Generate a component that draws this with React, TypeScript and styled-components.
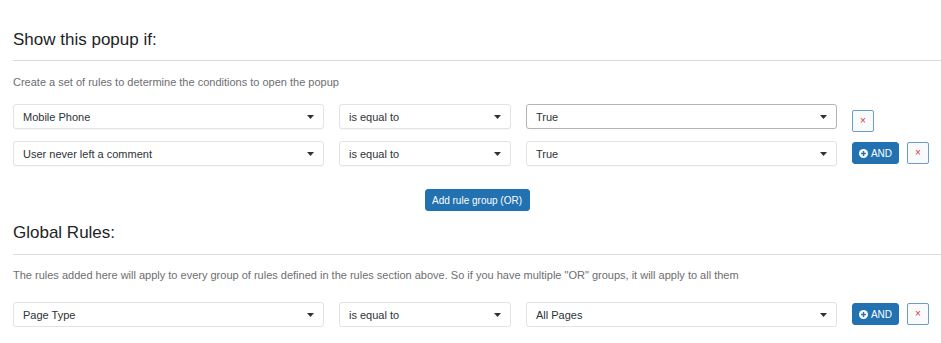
import styled, { createGlobalStyle } from 'styled-components';

const GlobalStyle = createGlobalStyle`
    html, body {
        margin: 0;
        padding: 0;
        background: #ffffff;
    }
    body {
        font-family: "Liberation Sans", Arial, Helvetica, sans-serif;
        color: #23282d;
    }
`;

const Page = styled.div`
    width: 941px;
    padding: 0 0 0 13px;
    box-sizing: border-box;
`;

const Section = styled.section`
    display: flex;
    flex-direction: column;
`;

const SectionHeader = styled.div<{ $top: number; $bottom: number }>`
    padding: ${(p) => p.$top}px 0 ${(p) => p.$bottom}px;
    border-bottom: 1px solid #dcdcde;
`;

const Title = styled.h2`
    margin: 0;
    font-size: 17px;
    line-height: 20px;
    font-weight: 400;
    color: #1d2327;
`;

const Description = styled.p<{ $top: number; $bottom: number }>`
    margin: ${(p) => p.$top}px 0 ${(p) => p.$bottom}px;
    font-size: 11px;
    line-height: 16px;
    color: #6d6e70;
`;

const RuleList = styled.div`
    display: flex;
    flex-direction: column;
    row-gap: 12px;
`;

const RuleRow = styled.div`
    display: flex;
    align-items: flex-start;
    column-gap: 15px;
    height: 25px;
`;

const SelectBox = styled.div<{ $width: number; $active?: boolean }>`
    width: ${(p) => p.$width}px;
    height: 25px;
    box-sizing: border-box;
    display: flex;
    align-items: center;
    justify-content: space-between;
    padding: 0 9px 0 9px;
    background: #ffffff;
    border: 1px solid ${(p) => (p.$active ? '#b4b4b4' : '#e3e3e5')};
    border-radius: 3px;
    box-shadow: 0 1px 1px rgba(0, 0, 0, 0.03);
    font-size: 11px;
    color: #2c3338;
`;

const Caret = styled.svg`
    width: 7px;
    height: 4px;
    flex-shrink: 0;
`;

const Actions = styled.div<{ $top: number }>`
    display: flex;
    align-items: flex-start;
    column-gap: 8px;
    height: 25px;
    padding-top: ${(p) => p.$top}px;
    box-sizing: border-box;
`;

const RemoveButton = styled.button`
    width: 22px;
    height: 22px;
    flex-shrink: 0;
    padding: 0;
    display: flex;
    align-items: center;
    justify-content: center;
    background: #f8fafc;
    border: 1px solid #6c9bd0;
    border-radius: 2px;
    color: #d63638;
    font-family: "Liberation Sans", Arial, sans-serif;
    font-size: 10px;
    line-height: 1;
    cursor: pointer;
`;

const PrimaryButton = styled.button<{ $width: number }>`
    width: ${(p) => p.$width}px;
    height: 22px;
    flex-shrink: 0;
    padding: 0;
    display: flex;
    align-items: center;
    justify-content: center;
    column-gap: 3px;
    background: #2271b1;
    border: 1px solid #2271b1;
    border-radius: 3px;
    color: #ffffff;
    font-family: "Liberation Sans", Arial, sans-serif;
    font-size: 10px;
    cursor: pointer;
`;

const CenterBar = styled.div`
    display: flex;
    justify-content: center;
    margin: 23px 0 0;
`;

const PlusIcon = () => (
    <svg width="9" height="9" viewBox="0 0 10 10">
        <circle cx="5" cy="5" r="5" fill="#ffffff" />
        <path d="M5 2.3v5.4M2.3 5h5.4" stroke="#2271b1" strokeWidth="1.6" />
    </svg>
);

const DropCaret = () => (
    <Caret viewBox="0 0 7 4"><path d="M0 0h7L3.5 4z" fill="#2c3338" /></Caret>
);

type Rule = {
    field: string;
    value: string;
    active?: boolean;
    canAdd?: boolean;
};

const RuleLine = ({ field, value, active, canAdd }: Rule) => (
    <RuleRow>
        <SelectBox $width={311}>
            <span>{field}</span>
            <DropCaret />
        </SelectBox>
        <SelectBox $width={172}>
            <span>is equal to</span>
            <DropCaret />
        </SelectBox>
        <SelectBox $width={311} $active={active}>
            <span>{value}</span>
            <DropCaret />
        </SelectBox>
        <Actions $top={canAdd ? 1 : 6}>
            {canAdd && (
                <PrimaryButton $width={47}>
                    <PlusIcon />
                    AND
                </PrimaryButton>
            )}
            <RemoveButton>×</RemoveButton>
        </Actions>
    </RuleRow>
);

const popupRules: Rule[] = [
    { field: 'Mobile Phone', value: 'True', active: true },
    { field: 'User never left a comment', value: 'True', canAdd: true },
];

const globalRules: Rule[] = [
    { field: 'Page Type', value: 'All Pages', canAdd: true },
];

const App = () => (
    <Page>
        <GlobalStyle />
        <Section>
            <SectionHeader $top={30} $bottom={10}>
                <Title>Show this popup if:</Title>
            </SectionHeader>
            <Description $top={13} $bottom={14}>
                Create a set of rules to determine the conditions to open the popup
            </Description>
            <RuleList>
                {popupRules.map((rule, index) => (
                    <RuleLine key={`${rule.field}-${index.toString()}`} {...rule} />
                ))}
            </RuleList>
            <CenterBar>
                <PrimaryButton $width={105}>Add rule group (OR)</PrimaryButton>
            </CenterBar>
        </Section>
        <Section>
            <SectionHeader $top={12} $bottom={11}>
                <Title>Global Rules:</Title>
            </SectionHeader>
            <Description $top={12} $bottom={19}>
                The rules added here will apply to every group of rules defined in the rules section above. So if you have multiple "OR" groups, it will apply to all them
            </Description>
            <RuleList>
                {globalRules.map((rule, index) => (
                    <RuleLine key={`${rule.field}-${index.toString()}`} {...rule} />
                ))}
            </RuleList>
        </Section>
    </Page>
);

export default App;
